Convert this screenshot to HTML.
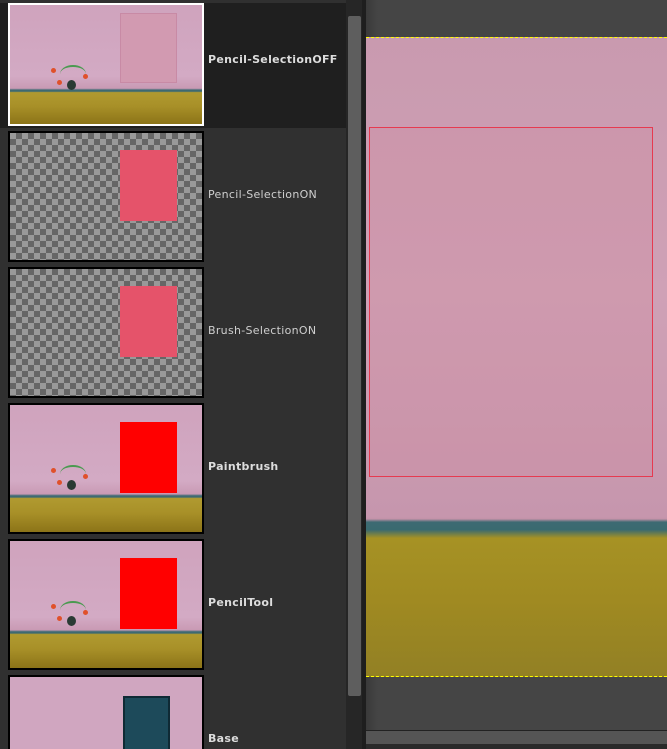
<!DOCTYPE html><html><head><style>
*{margin:0;padding:0;box-sizing:border-box}
html,body{width:667px;height:749px;overflow:hidden}
body{background:#2f2f2f;font-family:"DejaVu Sans","Liberation Sans",sans-serif;position:relative}
.panel{position:absolute;left:0;top:0;width:346px;height:749px;background:#303030;overflow:hidden}
.row{position:absolute;left:0;width:346px;height:136px;overflow:hidden}
.sel{background:#1f1f1f}
.th{position:absolute;left:8px;width:196px;height:131px;border:2px solid #000;overflow:hidden;background:linear-gradient(180deg,#cfa3bd 0%,#d3aac4 60%,#c99ab4 70%,#3d6a72 71.5%,#3d6a72 72.5%,#b09a30 73.5%,#a89028 85%,#8c7418 100%)}
.sel .th{border-color:#fff}
.chk{background-color:#999;background-image:linear-gradient(45deg,#666 25%,transparent 25%,transparent 75%,#666 75%),linear-gradient(45deg,#666 25%,transparent 25%,transparent 75%,#666 75%);background-size:12px 12px;background-position:0 0,6px 6px}
.lbl{position:absolute;left:208px;font-size:11px;color:#ddd;font-weight:bold;letter-spacing:.3px}
.n{font-weight:normal;color:#cfcfcf}
.rect{position:absolute;left:110px;top:17px;width:57px;height:71px}
.vase{position:absolute;left:57px;top:75px;width:9px;height:10px;border-radius:50%;background:#2a3a34}
.fl{position:absolute;width:5px;height:5px;border-radius:50%;background:#e0502a}
.st{position:absolute;left:50px;top:60px;width:26px;height:18px;border-top:2px solid #4a9a50;border-radius:50%}
</style></head><body>
<div class="panel">
<div class="row sel" style="top:3px;height:125px"><div class="th" style="top:0;height:123px"><div class="rect" style="left:110px;top:8px;width:57px;height:70px;background:#d29ab1;border:1px solid #c88aa5"></div><div class="st"></div><div class="vase"></div><div class="fl" style="left:41px;top:63px"></div><div class="fl" style="left:47px;top:75px"></div><div class="fl" style="left:73px;top:69px"></div></div><div class="lbl" style="top:50px">Pencil-SelectionOFF</div></div>
<div class="row" style="top:131px"><div class="th chk" style="top:0"><div class="rect" style="background:#e5536a"></div></div><div class="lbl n" style="top:57px">Pencil-SelectionON</div></div>
<div class="row" style="top:267px"><div class="th chk" style="top:0"><div class="rect" style="background:#e5536a"></div></div><div class="lbl n" style="top:57px">Brush-SelectionON</div></div>
<div class="row" style="top:403px"><div class="th" style="top:0"><div class="rect" style="background:#f00"></div><div class="st"></div><div class="vase"></div><div class="fl" style="left:41px;top:63px"></div><div class="fl" style="left:47px;top:75px"></div><div class="fl" style="left:73px;top:69px"></div></div><div class="lbl" style="top:57px">Paintbrush</div></div>
<div class="row" style="top:539px"><div class="th" style="top:0"><div class="rect" style="background:#f00"></div><div class="st"></div><div class="vase"></div><div class="fl" style="left:41px;top:63px"></div><div class="fl" style="left:47px;top:75px"></div><div class="fl" style="left:73px;top:69px"></div></div><div class="lbl" style="top:57px">PencilTool</div></div>
<div class="row" style="top:675px;height:74px"><div class="th" style="top:0;height:74px;border-bottom:0;background:#d0a6c0"><div class="rect" style="left:113px;top:19px;width:47px;height:55px;background:#1d4a5a;border:2px solid #0f2a35;border-bottom:0"></div></div><div class="lbl" style="top:57px">Base</div></div>
</div>
<div style="position:absolute;left:346px;top:0;width:16px;height:749px;background:#262626"></div>
<div style="position:absolute;left:348px;top:16px;width:13px;height:680px;background:#5e5e5e;border-radius:2px"></div>
<div style="position:absolute;left:362px;top:0;width:4px;height:749px;background:#1e1e1e"></div>
<div style="position:absolute;left:366px;top:0;width:301px;height:730px;background:linear-gradient(90deg,#3a3a3a,#454545 12px,#454545)"></div>
<div style="position:absolute;left:366px;top:730px;width:301px;height:19px;background:#2a2a2a;border-top:1px solid #222"><div style="height:13px;background:#555"></div></div>
<div style="position:absolute;left:366px;top:37px;width:301px;height:640px;background:linear-gradient(180deg,#c99aaf 0%,#cfa1b6 40%,#c696ad 75%,#c292a8 75.3%,#3d6a72 75.8%,#3a6a70 77%,#a69224 78.3%,#a08a22 88%,#928024 100%)"></div>
<div style="position:absolute;left:366px;top:37px;width:301px;height:1px;border-top:1px dashed #ff0"></div>
<div style="position:absolute;left:366px;top:676px;width:301px;height:1px;border-top:1px dashed #ff0"></div>
<div style="position:absolute;left:369px;top:127px;width:284px;height:350px;border:1px solid #e63a50;background:rgba(205,140,160,.35)"></div>
</body></html>
